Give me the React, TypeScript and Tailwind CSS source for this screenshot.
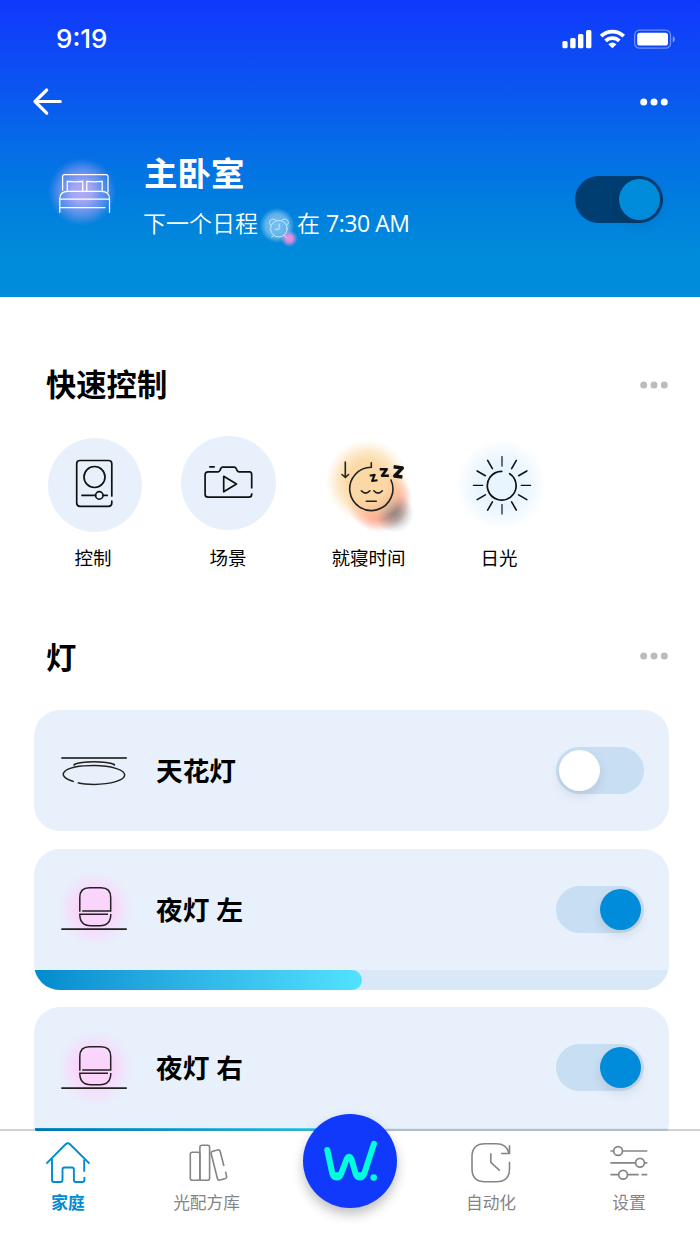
import type { ReactNode } from "react";

const FONT = "font-['Open_Sans','Noto_Sans_CJK_SC',sans-serif]";

function Dots({ className }: { className: string }) {
  return (
    <svg width="28" height="8" viewBox="0 0 28 8" className={className} fill="currentColor">
      <circle cx="3.7" cy="4" r="3.5" />
      <circle cx="14" cy="4" r="3.5" />
      <circle cx="24.3" cy="4" r="3.5" />
    </svg>
  );
}

function Toggle({ on, dark }: { on: boolean; dark?: boolean }) {
  return (
    <div
      className={`flex h-[47px] w-[88px] shrink-0 items-center rounded-full px-[3px] ${
        dark ? "bg-[#003d70]" : "bg-[#c8def3]"
      } ${on ? "justify-end" : "justify-start"}`}
    >
      <div
        className={`size-[41px] rounded-full shadow-[0_5px_12px_rgba(0,0,0,0.1)] ${on ? "bg-[#008cdb]" : "bg-white"}`}
      />
    </div>
  );
}

function StatusIcons() {
  return (
    <svg width="114" height="24" viewBox="561 27 114 24" fill="#fff">
      <rect x="562.4" y="41" width="5.2" height="7.2" rx="1.5" />
      <rect x="570.2" y="38" width="5.4" height="10.2" rx="1.5" />
      <rect x="578" y="34" width="5.4" height="14.2" rx="1.5" />
      <rect x="586" y="30" width="5.4" height="18.2" rx="1.5" />
      <g fill="none" stroke="#fff" strokeWidth="3.8">
        <path d="M601.1 36.2a16 16 0 0 1 22.6 0" />
        <path d="M605.5 40.9a9.8 9.8 0 0 1 13.8 0" />
      </g>
      <path d="M612.4 48.2l-4.100-4q4.100-3.400 8.200 0z" />
      <rect x="634.7" y="30.2" width="35.8" height="18" rx="4.8" fill="none" stroke="#fff" strokeOpacity=".4" strokeWidth="1.3" />
      <rect x="637.2" y="32.8" width="30.8" height="12.8" rx="2.6" />
      <path d="M672.8 36q2 1 2 3.300t-2 3.300z" opacity=".5" />
    </svg>
  );
}

function BedIcon() {
  return (
    <svg width="70" height="70" viewBox="47 157 70 70" fill="none" stroke="#fff" strokeWidth="1.25" strokeLinecap="round">
      <defs>
        <radialGradient id="bedGlow">
          <stop offset="0" stopColor="#b3acf6" />
          <stop offset=".3" stopColor="#aea9f5" stopOpacity=".92" />
          <stop offset=".7" stopColor="#8f9cf2" stopOpacity=".55" />
          <stop offset="1" stopColor="#7d92f0" stopOpacity="0" />
        </radialGradient>
      </defs>
      <circle cx="82" cy="192" r="34" fill="url(#bedGlow)" stroke="none" />
      <path d="M62.600 190v-13.500q0-2 2-2H106q2 0 2 2v15.500" />
      <path d="M67.300 191v-9.600q7.700.9 15.400 0v9M86.800 191v-9.600q7.700.9 15.400 0v9" />
      <path d="M59.800 212.300v-13.500q0-7.500 8-7.500h33.500q8.200 0 8.200 7.500v13.500M59.800 199.200h49.700M60.500 207.500h44.500" />
    </svg>
  );
}

function AlarmIcon() {
  return (
    <svg width="39" height="40" viewBox="258 206 39 40" className="-mb-[5px] shrink-0 overflow-visible" fill="none">
      <defs>
        <radialGradient id="alarmGlow">
          <stop offset="0" stopColor="#7dc0f0" />
          <stop offset=".65" stopColor="#6cb9ec" stopOpacity=".9" />
          <stop offset="1" stopColor="#6cb9ec" stopOpacity="0" />
        </radialGradient>
        <radialGradient id="pinkDot">
          <stop offset="0" stopColor="#f58ee0" />
          <stop offset=".4" stopColor="#ec8fe0" stopOpacity=".9" />
          <stop offset="1" stopColor="#ce93e2" stopOpacity="0" />
        </radialGradient>
      </defs>
      <circle cx="277" cy="225.500" r="17.500" fill="url(#alarmGlow)" />
      <circle cx="289.300" cy="238.500" r="8.500" fill="url(#pinkDot)" />
      <g stroke="#d5edff" strokeWidth=".9" strokeLinecap="round">
        <circle cx="278.900" cy="228.700" r="8.300" />
        <path d="M279.200 224v5.300h-4M273.500 235.500l-1.700 2M284.500 235.500l1.700 2M270.300 224.800c-2.600-3.200 1-7.400 5.200-5M287.500 224.800c2.600-3.200-1-7.400-5.200-5" />
      </g>
    </svg>
  );
}

function ControlIcon() {
  return (
    <svg width="44" height="52" viewBox="72.500 459 44 52" fill="none" stroke="#111" strokeWidth="1.700" strokeLinecap="round">
      <path d="M111.300 496v-32.200q0-3.300-3.300-3.300H79.500q-3.300 0-3.300 3.300V503q0 3.300 3.300 3.300H108q3.300 0 3.300-3.300v-1.800" />
      <circle cx="94" cy="477" r="10.500" />
      <path d="M81.500 495.400H95M102.700 495.400h4" />
      <circle cx="98.800" cy="495.400" r="3.700" />
    </svg>
  );
}

function CameraIcon() {
  return (
    <svg width="52" height="36" viewBox="202.600 465.500 52 36" fill="none" stroke="#111" strokeWidth="1.700" strokeLinejoin="round">
      <path d="M252.300 489v-13.700q0-3-2-3h-10.500q-1.500 0-2-1.200l-1-2q-.6-1.400-2-1.400h-11.500q-1.400 0-2 1.400l-.8 2q-.4 1.200-1.800 1.200h-10q-3 0-3 3v19.400q0 3 3 3h40.600q3 0 3-3v-1" />
      <path d="M209.800 467.400h5.600M224.300 476.800l12.800 7.800-12.800 7.700z" />
    </svg>
  );
}

function SleepIcon() {
  return (
    <svg width="94" height="94" viewBox="322 436 94 94" className="overflow-visible" fill="none" stroke="#222" strokeWidth="1.600" strokeLinecap="round">
      <defs>
        <radialGradient id="dusk">
          <stop offset="0" stopColor="#777" stopOpacity=".75" />
          <stop offset=".35" stopColor="#808080" stopOpacity=".6" />
          <stop offset=".7" stopColor="#909090" stopOpacity=".28" />
          <stop offset="1" stopColor="#aaa" stopOpacity="0" />
        </radialGradient>
        <radialGradient id="ember">
          <stop offset="0" stopColor="#fd8f6e" />
          <stop offset=".6" stopColor="#fd987a" stopOpacity=".9" />
          <stop offset=".82" stopColor="#fea78e" stopOpacity=".5" />
          <stop offset="1" stopColor="#feb7a2" stopOpacity="0" />
        </radialGradient>
        <radialGradient id="amber">
          <stop offset="0" stopColor="#fbd9a5" />
          <stop offset=".48" stopColor="#fbd9a5" stopOpacity=".96" />
          <stop offset=".72" stopColor="#fbdba9" stopOpacity=".6" />
          <stop offset="1" stopColor="#fdeacb" stopOpacity="0" />
        </radialGradient>
      </defs>
      <g stroke="none">
        <circle cx="379" cy="499" r="33" fill="url(#ember)" />
        <circle cx="394" cy="513" r="20" fill="url(#dusk)" />
        <circle cx="367" cy="481" r="42" fill="url(#amber)" />
      </g>
      <path d="M371.300 462.800v4.500A21.600 21.600 0 1 0 391 480" />
      <path d="M345.300 462v15.300M342 474.500l3.300 3 3.300-3M361.300 490.800q4.300 4.600 8.600 0M373.800 490.800q4.300 4.600 8.600 0M366.300 501.300h10" />
      <g stroke="#111" strokeLinecap="square" strokeLinejoin="round">
        <path d="M370.700 475.400l4-.6-2.600 6.200 4.400-.6" strokeWidth="2" />
        <path d="M381 469.300h5.700l-4.700 6.500h5.600" strokeWidth="2.600" />
        <path d="M395.300 467l7 1-7.600 8 6 .8" strokeWidth="3.400" />
      </g>
    </svg>
  );
}

function SunIcon() {
  return (
    <svg width="94" height="94" viewBox="454.800 438 94 94" fill="none" stroke="#111" strokeWidth="1.700" strokeLinecap="round">
      <defs>
        <radialGradient id="sunGlow">
          <stop offset="0" stopColor="#e8f4fe" />
          <stop offset=".5" stopColor="#e9f5fe" />
          <stop offset="1" stopColor="#e9f5fe" stopOpacity="0" />
        </radialGradient>
      </defs>
      <circle cx="501" cy="484.500" r="46" fill="url(#sunGlow)" stroke="none" />
      <path d="M501.500 471.300A14.400 14.400 0 1 0 509.500 473.700" />
      {[0, 30, 60, 90, 120, 150, 180, 210, 240, 270, 300, 330].map((a) => (
        <path
          key={a}
          d="M501.800 456.600v9.500"
          strokeWidth={a % 90 === 0 ? 1.2 : 1.6}
          transform={`rotate(${a} 501.800 485.300)`}
        />
      ))}
    </svg>
  );
}

function CeilingLampIcon() {
  return (
    <svg width="68" height="80" viewBox="60 731 68 80" fill="none" stroke="#222" strokeWidth="1.500">
      <path d="M61.300 758h65.500" stroke="#444" strokeWidth="1.800" />
      <path d="M74.200 765.800v-1.300q6-2.800 19.800-2.800t20.300 2.800v1.300" />
      <path d="M73.900 781.600C54.500 776 62 765.600 94 765.600c17 0 30.700 4.200 30.700 9.400s-13.700 9.400-30.700 9.400c-6 0-12-.6-16.300-1.700" />
    </svg>
  );
}

function NightLampIcon() {
  return (
    <svg width="68" height="80" viewBox="60 869 68 80" className="overflow-visible" fill="none" stroke="#222" strokeWidth="1.500">
      <defs>
        <radialGradient id="lampGlow">
          <stop offset="0" stopColor="#fcd3fb" />
          <stop offset=".45" stopColor="#fad5fb" />
          <stop offset="1" stopColor="#f0e0fb" stopOpacity="0" />
        </radialGradient>
      </defs>
      <circle cx="95" cy="909" r="40" fill="url(#lampGlow)" stroke="none" />
      <path d="M79.800 911.700V897.500q0-9.700 9.700-9.700h11.500q9.700 0 9.700 9.700v13.500H82.200" />
      <path d="M108 914.300H79.800q0 11.400 11 11.400h9q11 0 11-11.700" />
      <path d="M61.300 929.200h65.500" strokeWidth="1.800" />
    </svg>
  );
}

function HomeIcon() {
  return (
    <svg width="50" height="44" viewBox="43 1141 50 44" fill="none" stroke="currentColor" strokeWidth="1.900">
      <path d="M46.400 1163.600l19.200-19.300q2.200-2 4.400 0l19.500 19.300" />
      <path d="M52 1159v21q0 2 2 2h6.500q2 0 2-2v-10.500q0-2 2-2h7.400q2 0 2 2V1180q0 2 2 2h6.500q2 0 2-2v-3M84.200 1171.700v-12.200" />
    </svg>
  );
}

function LibraryIcon() {
  return (
    <svg width="44" height="44" viewBox="185.500 1141 44 44" fill="none" stroke="currentColor" strokeWidth="1.600">
      <rect x="190.800" y="1152.300" width="9.600" height="28" rx="2" />
      <rect x="200.400" y="1145.300" width="9.700" height="35" rx="2" />
      <path d="M224.400 1166l-3.700-14.500q-.5-2-2.500-1.500l-5 1.300q-2 .5-1.500 2.500l6.200 24.700q.5 2 2.500 1.500l4.700-1.200q2.500-.6 2-2.500l-1-4.600" />
    </svg>
  );
}

function AutomationIcon() {
  return (
    <svg width="44" height="44" viewBox="468.500 1141 44 44" fill="none" stroke="currentColor" strokeWidth="1.600">
      <path d="M509 1161.700v7q0 13-13 13h-11.500q-13 0-13-13v-12q0-13 13-13H496q10 0 12.500 9.300" />
      <path d="M509 1145.300v8.200h-8.500M490.300 1153.300v9l9 8.400" />
    </svg>
  );
}

function SettingsIcon() {
  return (
    <svg width="40" height="44" viewBox="609 1141 40 44" fill="none" stroke="currentColor" strokeWidth="1.700">
      <path d="M610.400 1151h3.300M622.500 1151h24.800M610.400 1162.800h25.200M644.300 1162.800h3M610.400 1174.700h8.300M627.500 1174.700h11.200M641.500 1174.700h5.800" />
      <circle cx="618.100" cy="1151" r="4.400" />
      <circle cx="640" cy="1162.800" r="4.400" />
      <circle cx="623.100" cy="1174.700" r="4.400" />
    </svg>
  );
}

function SectionTitle({ title, className }: { title: string; className?: string }) {
  return (
    <div className="flex h-[30px] items-center justify-between pr-8 pl-[46px]">
      <h2 className={`text-[30.300px] leading-[30px] font-bold ${className ?? ""}`}>{title}</h2>
      <Dots className="text-[#bcbcbc]" />
    </div>
  );
}

function QuickItem({ plain, children, className }: { plain?: boolean; children: ReactNode; className: string }) {
  return (
    <div
      className={`flex size-[94.500px] shrink-0 items-center justify-center rounded-full ${plain ? "" : "bg-[#e8f1fb]"} ${className}`}
    >
      {children}
    </div>
  );
}

function QuickLabel({ text, className }: { text: string; className: string }) {
  return <span className={`shrink-0 text-center text-[18.500px] leading-[24px] whitespace-nowrap ${className}`}>{text}</span>;
}

function LightCard({ name, on, level, children }: { name: string; on: boolean; level?: number; children: ReactNode }) {
  return (
    <div className="shrink-0 overflow-hidden rounded-[26px] bg-[#e8f1fb]">
      <div className="flex h-[121px] items-center pr-[25px] pl-[26px]">
        {children}
        <span className="ml-[28px] flex-1 pt-[1px] text-[26.700px] leading-[32px] font-bold">{name}</span>
        <Toggle on={on} />
      </div>
      {level !== undefined && (
        <div className="h-[20px] overflow-hidden rounded-b-[20px] bg-[#d9e8f7]">
          <div
            className="h-full rounded-r-[10px] bg-linear-to-r from-[#008bce] to-[#52e2ff]"
            style={{ width: `${level}%` }}
          />
        </div>
      )}
    </div>
  );
}

function NavItem({ label, active, children, className }: { label: string; active?: boolean; children: ReactNode; className: string }) {
  return (
    <div className={`flex flex-col items-center pt-[10px] ${className} ${active ? "text-[#008bd2]" : "text-[#858585]"}`}>
      {children}
      <span className={`mt-[7px] text-[16.700px] leading-[22px] whitespace-nowrap ${active ? "font-bold" : ""}`}>{label}</span>
    </div>
  );
}

export default function App() {
  return (
    <div className={`flex h-[1244px] w-[700px] flex-col overflow-hidden bg-white text-black ${FONT}`} lang="zh-CN">
      <header className="flex h-[297.400px] shrink-0 flex-col bg-[linear-gradient(180deg,#1139fc_1%,#0b55f0_30%,#066be8_48%,#017ddf_68%,#008cda_86%)] text-white">
        <div className="flex h-[78px] items-center justify-between pr-[25px] pl-[56px]">
          <span className="font-['Inter',sans-serif] text-[26px] leading-[30px] font-medium">9:19</span>
          <StatusIcons />
        </div>
        <div className="flex h-[47px] items-center justify-between pr-8 pl-[31px]">
          <svg width="32" height="30" viewBox="31 87 32 30" fill="none" stroke="#fff" strokeWidth="3.200" strokeLinecap="round" strokeLinejoin="round">
            <path d="M35 101.500h25.300M46.700 90L35 101.500l11.700 11.700" />
          </svg>
          <Dots className="text-white" />
        </div>
        <div className="flex pt-[26px] pr-[37px] pl-[47px]">
          <div className="pt-[6px]">
            <BedIcon />
          </div>
          <div className="ml-[26px] flex-1">
            <h1 className="ml-[1px] text-[33.500px] leading-[44px] font-bold">主卧室</h1>
            <div className="mt-[8px] flex h-[40px] items-center text-[23px] leading-[30px] font-[350] whitespace-nowrap">
              <span>下一个日程</span>
              <AlarmIcon />
              <span>
                在 <span className="font-normal tracking-[-0.450px]">7:30 AM</span>
              </span>
            </div>
          </div>
          <div className="pt-[25px]">
            <Toggle on dark />
          </div>
        </div>
      </header>

      <main className="flex min-h-0 flex-1 flex-col overflow-hidden pt-[73px]">
        <SectionTitle title="快速控制" />
        <div className="mt-[37.500px] flex h-[94px] shrink-0 pl-[47.700px]">
          <QuickItem className="">
            <ControlIcon />
          </QuickItem>
          <QuickItem className="-mt-[2px] ml-[39px]">
            <CameraIcon />
          </QuickItem>
          <QuickItem plain className="-mt-[2px] ml-[46px]">
            <SleepIcon />
          </QuickItem>
          <QuickItem plain className="ml-[38.500px]">
            <SunIcon />
          </QuickItem>
        </div>
        <div className="mt-[14px] flex shrink-0 pl-[33px]">
          <QuickLabel text="控制" className="w-[120px]" />
          <QuickLabel text="场景" className="ml-[15px] w-[120px]" />
          <QuickLabel text="就寝时间" className="ml-[20.500px] w-[120px]" />
          <QuickLabel text="日光" className="ml-[10.500px] w-[120px]" />
        </div>
        <div className="mt-[71px] shrink-0">
          <SectionTitle title="灯" className="pt-[4px]" />
        </div>
        <div className="mt-[39.600px] flex shrink-0 flex-col gap-[17.500px] pr-[31px] pl-[34px]">
          <LightCard name="天花灯" on={false}>
            <CeilingLampIcon />
          </LightCard>
          <LightCard name="夜灯 左" on level={51.7}>
            <NightLampIcon />
          </LightCard>
          <LightCard name="夜灯 右" on level={51.7}>
            <NightLampIcon />
          </LightCard>
        </div>
      </main>

      <nav className="relative -mt-[2px] flex h-[115px] shrink-0 border-t-2 border-[rgba(0,0,0,0.18)] bg-white bg-clip-padding">
        <NavItem label="家庭" active className="w-[136px]">
          <HomeIcon />
        </NavItem>
        <NavItem label="光配方库" className="w-[141px]">
          <LibraryIcon />
        </NavItem>
        <div className="-mt-[17.300px] ml-[25.700px] flex size-[94.500px] items-center justify-center rounded-full bg-[#1139fb] shadow-[0_6px_12px_rgba(0,0,0,0.25)]">
          <svg width="60" height="44" viewBox="320 1139 60 44" fill="none" stroke="#00ffdc" strokeLinejoin="round" strokeLinecap="round">
            <path
              d="M327.300 1150l4.900 23q1.100 4.500 4.500 4.500 3.200 0 4.500-4l5.500-14.500q2.300-4.500 4.700 0l4.200 14.500q1.200 4 4.100 4 3.200 0 4.600-4L373.900 1143.800"
              strokeWidth="6"
            />
            <path d="M333.500 1174h6M356.500 1174h5.500" strokeWidth="3.500" />
            <circle cx="373.700" cy="1177.500" r="3.300" fill="#00ffdc" stroke="none" />
          </svg>
        </div>
        <NavItem label="自动化" className="ml-[33.800px] w-[120px]">
          <AutomationIcon />
        </NavItem>
        <NavItem label="设置" className="ml-[18px] w-[120px]">
          <SettingsIcon />
        </NavItem>
      </nav>
    </div>
  );
}
